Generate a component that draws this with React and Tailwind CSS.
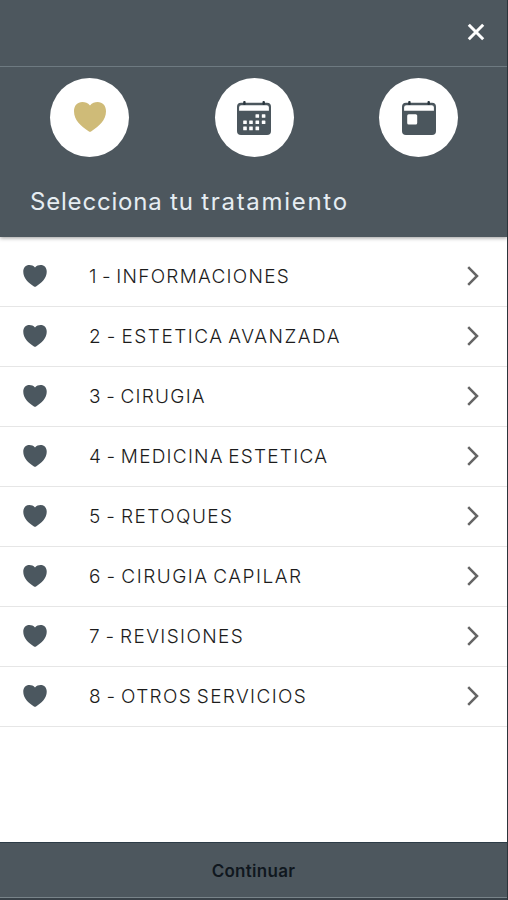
import React, { useState } from 'react';

const treatments = [
    { id: 1, label: "1 - INFORMACIONES", spacing: "tracking-[1.25px]" },
    { id: 2, label: "2 - ESTETICA AVANZADA", spacing: "tracking-[1.5px]" },
    { id: 3, label: "3 - CIRUGIA", spacing: "tracking-[1.25px]" },
    { id: 4, label: "4 - MEDICINA ESTETICA", spacing: "tracking-[1.24px]" },
    { id: 5, label: "5 - RETOQUES", spacing: "tracking-[1.45px]" },
    { id: 6, label: "6 - CIRUGIA CAPILAR", spacing: "tracking-[1.5px]" },
    { id: 7, label: "7 - REVISIONES", spacing: "tracking-[1.38px]" },
    { id: 8, label: "8 - OTROS SERVICIOS", spacing: "tracking-[1.38px]" }
];

const Heart = ({ className }) => (
    <svg viewBox="0 0 32 30" className={className} fill="currentColor">
        <path d="M16 3.4C18.2 1 20.7 0 23.6 0C28.6 0 32 3.7 32 9.2C32 18.2 25 24.2 17.4 29.2C16.5 29.9 15.5 29.9 14.6 29.2C7 24.2 0 18.2 0 9.2C0 3.7 3.4 0 8.4 0C11.3 0 13.8 1 16 3.4Z" />
    </svg>
);

const CalendarFrame = ({ children }) => (
    <svg viewBox="0 0 36 36" className="size-9">
        <rect x="1" y="2.7" width="34" height="32.3" rx="4" fill="#4b565d" />
        <rect x="7.2" y="1" width="2.4" height="4" rx="1" fill="#28343c" />
        <rect x="26.5" y="1" width="2.4" height="4" rx="1" fill="#28343c" />
        <path d="M3.1 10.8V7.4Q3.1 5.2 5.3 5.2H30.7Q32.9 5.2 32.9 7.4V10.8Z" fill="#fff" />
        {children}
    </svg>
);

const dots = [
    [21.3, 16], [27.6, 16],
    [9, 22.3], [15, 22.3], [21.3, 22.3], [27.6, 22.3],
    [9, 28.4], [15, 28.4], [21.3, 28.4]
];

const Step = ({ children }) => (
    <div className="flex size-[79px] items-center justify-center rounded-full bg-white">
        {children}
    </div>
);

const App = () => {
    const [selected, setSelected] = useState(null);

    return (
        <div className="flex h-[900px] w-[508px] flex-col overflow-hidden border-r border-[#2c353b] bg-white font-['Inter',sans-serif]">
            <header className="flex h-[237px] shrink-0 flex-col bg-[#4d575e] shadow-[0_1px_4px_rgba(0,0,0,0.4)]">
                <div className="flex h-[67px] items-center justify-end border-b border-[#6e7a81] pr-[22px] pb-0.5">
                    <button aria-label="Cerrar">
                        <svg viewBox="0 0 18 18" className="size-[18px]" fill="none" stroke="#fff" strokeWidth="3">
                            <path d="M1.8 1.8L16.2 16.2M16.2 1.8L1.8 16.2" />
                        </svg>
                    </button>
                </div>
                <div className="flex justify-between pt-[11px] pr-[49px] pl-[50px]">
                    <Step>
                        <Heart className="mb-px h-[30px] w-8 text-[#cfbb78]" />
                    </Step>
                    <Step>
                        <CalendarFrame>
                            {dots.map(([x, y]) => (
                                <rect key={`${x}-${y}`} x={x - 1.8} y={y - 1.8} width="3.6" height="3.6" rx="0.5" fill="#fff" />
                            ))}
                        </CalendarFrame>
                    </Step>
                    <Step>
                        <CalendarFrame>
                            <rect x="6.2" y="14.3" width="10" height="10.2" rx="1.5" fill="#fff" />
                        </CalendarFrame>
                    </Step>
                </div>
                <h1 className="mt-[29px] ml-[30px] text-[24px] leading-8 tracking-[1.24px] whitespace-nowrap text-[#e6edf2]">
                    <span className="tracking-[0.8px]">Selecciona tu </span>
                    <span className="tracking-[1.7px]">tratamiento</span>
                </h1>
            </header>

            <ul className="flex-1 pt-[10px]">
                {treatments.map((item) => (
                    <li key={item.id} className="h-[60px] border-b border-[#e6e6e6]">
                        <button
                            onClick={() => setSelected(item.id)}
                            aria-pressed={selected === item.id}
                            className="flex size-full items-center pr-[28px] pl-[23px] text-left"
                        >
                            <Heart className="mb-px h-[22px] w-6 text-[#4b575f]" />
                            <span className={`ml-[42px] flex-1 pt-0.5 text-[19px] font-light whitespace-nowrap text-[#1c1c1c] [word-spacing:-2.2px] ${item.spacing}`}>
                                {item.label}
                            </span>
                            <svg viewBox="0 0 12 20" className="mb-px h-5 w-3" fill="none" stroke="#656565" strokeWidth="2.5">
                                <path d="M1.2 1.2L10 10L1.2 18.8" />
                            </svg>
                        </button>
                    </li>
                ))}
            </ul>

            <footer className="flex h-[58px] shrink-0 flex-col border-t border-[#2d3c47] bg-[#4d575e]">
                <button className="flex-1 border-b border-[#788389] pt-1 text-[17px] font-semibold tracking-[0.3px] text-[#10171e]">
                    Continuar
                </button>
                <div className="h-0.5 bg-[#384148]" />
            </footer>
        </div>
    );
};

export default App;
